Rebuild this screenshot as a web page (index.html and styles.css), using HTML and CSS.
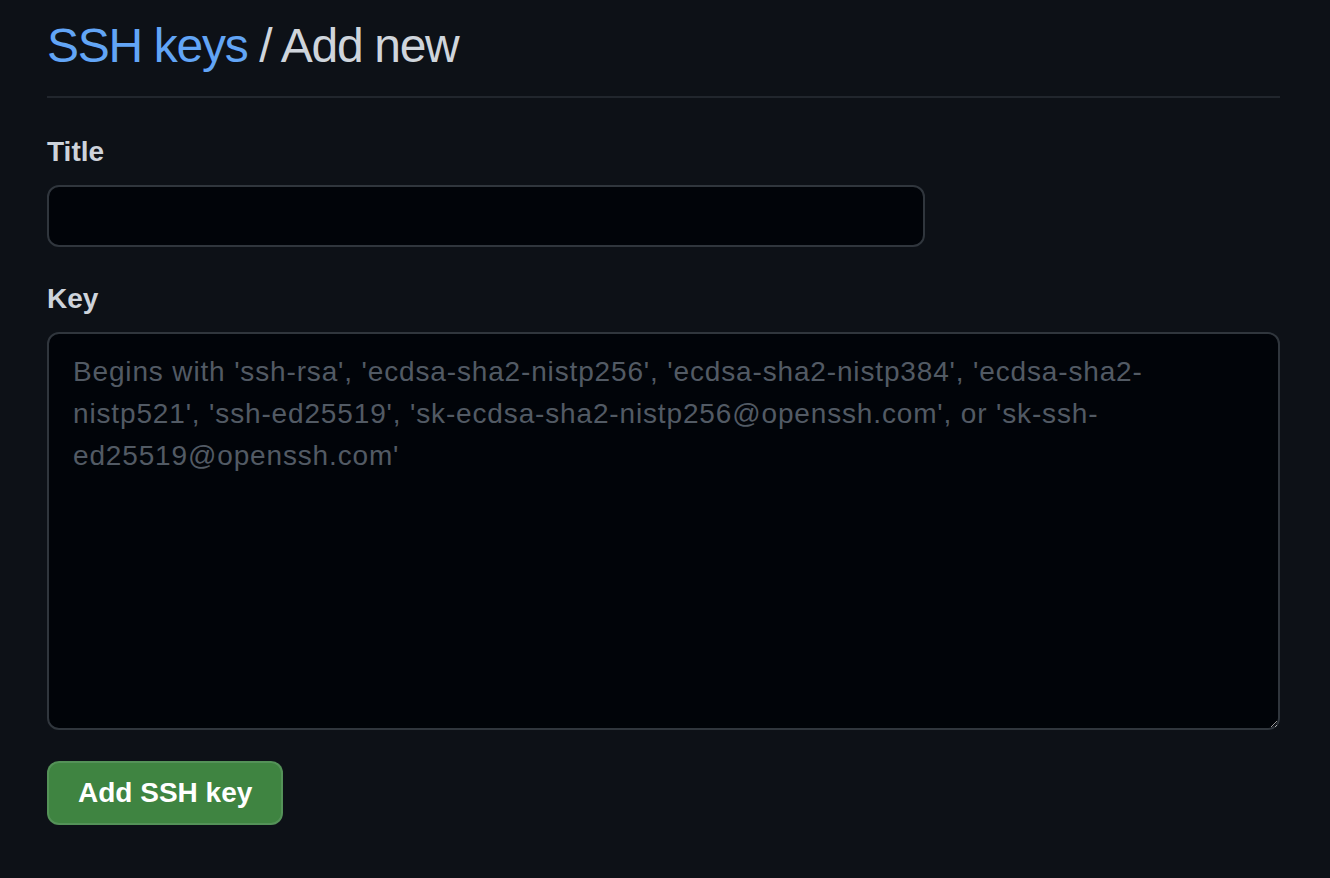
FILE: index.html
```html
<!DOCTYPE html>
<html lang="en">
<head>
<meta charset="utf-8">
<title>SSH keys / Add new</title>
<link rel="stylesheet" href="styles.css">
</head>
<body>
<main class="page">
  <h1 class="subhead"><a class="crumb" href="#">SSH keys</a> / Add new</h1>
  <form class="form">
    <div class="group">
      <label class="label" for="title">Title</label>
      <input class="control title-input" id="title" type="text">
    </div>
    <div class="group">
      <label class="label" for="key">Key</label>
      <textarea class="control key-input" id="key" placeholder="Begins with 'ssh-rsa', 'ecdsa-sha2-nistp256', 'ecdsa-sha2-nistp384', 'ecdsa-sha2-nistp521', 'ssh-ed25519', 'sk-ecdsa-sha2-nistp256@openssh.com', or 'sk-ssh-ed25519@openssh.com'"></textarea>
    </div>
    <div class="actions">
      <button class="btn-primary" type="button">Add SSH key</button>
    </div>
  </form>
</main>
</body>
</html>
```

FILE: styles.css
```css
html, body {
  margin: 0;
  padding: 0;
  background: #0d1117;
  height: 100%;
}
body {
  font-family: "Liberation Sans", Arial, sans-serif;
  color: #c9d1d9;
}
.page {
  width: 1233px;
  padding: 16px 0 0 47px;
}
.subhead {
  margin: 0;
  font-size: 48px;
  font-weight: 400;
  line-height: 60px;
  color: #cfd5dc;
  padding-bottom: 20px;
  border-bottom: 2px solid #21262d;
  letter-spacing: -1.3px;
}
.crumb {
  color: #62a5f6;
  text-decoration: none;
}
.form {
  display: flex;
  flex-direction: column;
}
.group {
  display: flex;
  flex-direction: column;
  align-items: flex-start;
  margin-top: 33px;
}
.group + .group {
  margin-top: 31px;
}
.label {
  font-size: 28px;
  font-weight: 700;
  line-height: 42px;
  margin-bottom: 12px;
  color: #cdd3db;
}
.control {
  box-sizing: border-box;
  background: #010409;
  border: 2px solid #30363d;
  border-radius: 12px;
  color: #c9d1d9;
  font-family: "Liberation Sans", Arial, sans-serif;
  font-size: 28px;
  outline: none;
  color-scheme: dark;
}
.title-input {
  width: 878px;
  height: 62px;
  padding: 0 24px;
}
.key-input {
  width: 1233px;
  height: 398px;
  padding: 17px 24px 15px;
  line-height: 42px;
  letter-spacing: 0.85px;
  resize: vertical;
}
.key-input::placeholder {
  color: #525a64;
  opacity: 1;
}
.actions {
  margin-top: 31px;
}
.btn-primary {
  box-sizing: border-box;
  height: 64px;
  padding: 0 29px;
  background: #3f8441;
  border: 2px solid rgba(240, 246, 252, 0.12);
  border-radius: 12px;
  color: #ffffff;
  font-family: "Liberation Sans", Arial, sans-serif;
  font-size: 28px;
  font-weight: 700;
  cursor: pointer;
}
```
